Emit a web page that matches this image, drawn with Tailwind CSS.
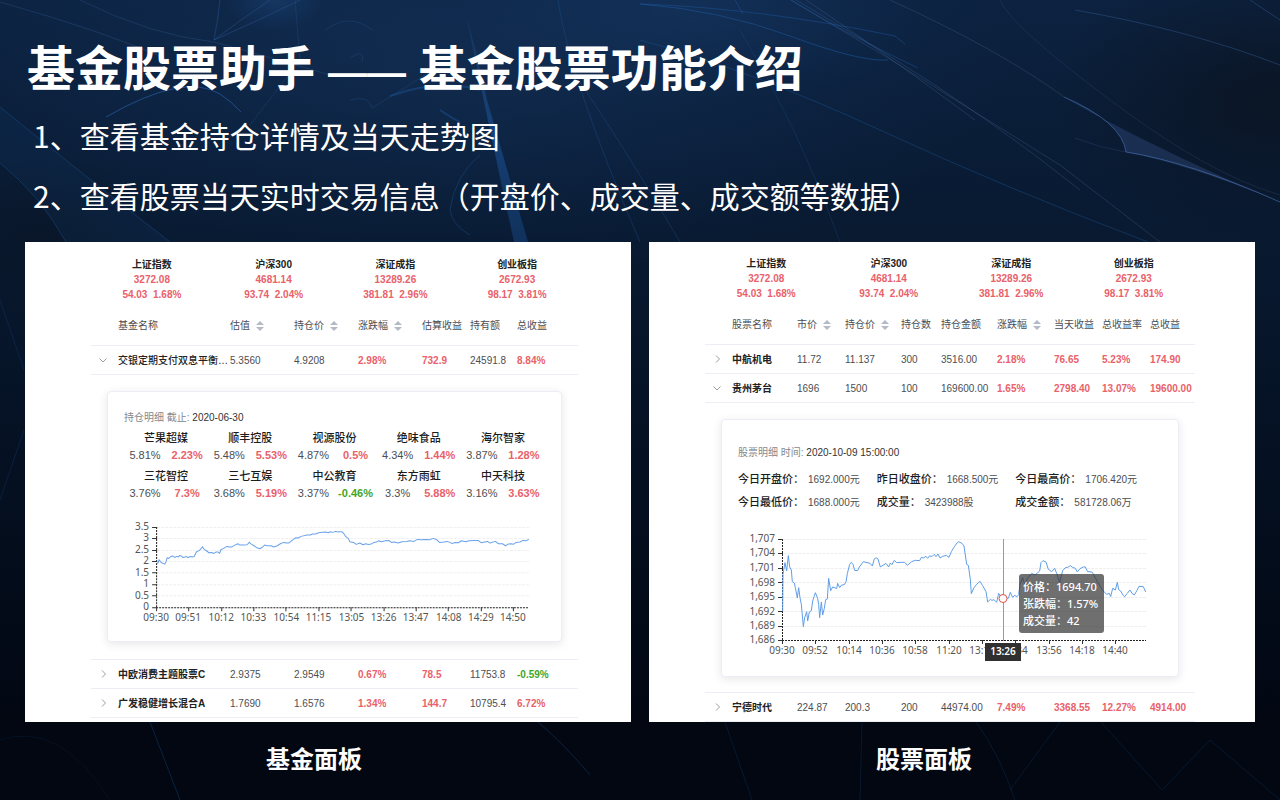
<!DOCTYPE html>
<html lang="zh-CN">
<head>
<meta charset="utf-8">
<meta name="viewport" content="width=device-width, initial-scale=1">
<title>基金股票助手</title>
<script src="https://cdn.jsdelivr.net/npm/@tailwindcss/browser@4"></script>
</head>
<body class="bg-[#030a17] font-['Liberation_Sans','Noto_Sans_CJK_SC',sans-serif]">
<main class="relative isolate min-h-screen overflow-hidden bg-linear-to-b from-[#0c2240] via-[#08182e] via-35% to-[#020712] to-90% px-[25px] pb-4">

  <!-- Backdrop: soft glows and light strands -->
  <svg class="absolute inset-0 -z-10 h-full w-full" viewBox="0 0 1280 800" preserveAspectRatio="none" fill="none" aria-hidden="true">
    <defs>
      <radialGradient id="glow"><stop offset="0" stop-color="#24508c" stop-opacity=".35"/><stop offset="1" stop-color="#1c4d8c" stop-opacity="0"/></radialGradient>
      <radialGradient id="shade"><stop offset="0" stop-color="#0b111c" stop-opacity=".7"/><stop offset="1" stop-color="#0b111c" stop-opacity="0"/></radialGradient>
      <linearGradient id="beam" x1="0" y1="0" x2="0" y2="1"><stop offset="0" stop-color="#2a6bb5" stop-opacity=".15"/><stop offset=".5" stop-color="#1f5ba8" stop-opacity=".5"/><stop offset="1" stop-color="#174c8c" stop-opacity=".45"/></linearGradient>
    </defs>
    <ellipse cx="450" cy="60" rx="560" ry="220" fill="url(#glow)" opacity=".7"/>
    <ellipse cx="275" cy="0" rx="50" ry="30" fill="url(#glow)"/>
    <ellipse cx="700" cy="10" rx="240" ry="90" fill="url(#glow)" opacity=".6"/>
    <ellipse cx="1270" cy="100" rx="220" ry="140" fill="url(#shade)"/>
    <ellipse cx="40" cy="240" rx="120" ry="90" fill="url(#shade)" opacity=".5"/>
    <path d="M466 15L476 52L487 100L528 242H514L492 140Z" fill="url(#beam)"/>
    <path d="M270 0Q240 20 214 40M220 0Q218 20 214 40M214 40Q260 20 300 0" stroke="#315f9e" stroke-opacity=".4"/>
    <path d="M0 2Q100 30 170 60M80 0Q150 35 214 42Q280 60 330 75" stroke="#34639c" stroke-opacity=".3"/>
    <path d="M106 117Q184 72 220 94Q232 102 241 112" stroke="#2b66b8" stroke-opacity=".6"/>
    <path d="M0 107Q90 180 170 242M0 163Q40 195 66 242" stroke="#1d5192" stroke-opacity=".45"/>
    <path d="M0 107Q90 180 170 242H66Q40 195 0 163Z" fill="#123a6b" fill-opacity=".2"/>
    <path d="M295 0L300 60L250 125M325 30Q350 12 372 30M350 58Q365 48 362 62M350 100Q370 95 372 108L430 72" stroke="#28588f" stroke-opacity=".3"/>
    <path d="M390 96Q440 78 480 90M440 110Q455 120 460 122" stroke="#1f5da8" stroke-opacity=".4" stroke-width="2"/>
    <path d="M480 155Q455 175 450 210Q452 225 470 235" stroke="#1f5da8" stroke-opacity=".35"/>
    <path d="M558 0Q570 80 640 242M575 75Q620 140 680 242" stroke="#2560a5" stroke-opacity=".28"/>
    <path d="M640 4Q720 10 790 36T888 60" stroke="#1d5ca8" stroke-opacity=".5"/>
    <path d="M791 0Q850 36 918 68M640 4Q760 8 895 36L905 44M735 0L743 14" stroke="#1f5fac" stroke-opacity=".4"/>
    <path d="M791 0L888 58L1060 165L1160 242M796 0L880 50Q990 118 1080 190M806 0Q880 50 975 120" stroke="#4b6a99" stroke-opacity=".3"/>
    <path d="M640 40Q750 70 880 130T1148 242" stroke="#1e5797" stroke-opacity=".4"/>
    <path d="M740 30Q800 130 840 242" stroke="#1e5797" stroke-opacity=".25"/>
    <path d="M890 0Q1000 50 1064 97" stroke="#576a8d" stroke-opacity=".3"/>
    <path d="M1000 0Q1010 25 1110 100T1280 195" stroke="#3b5680" stroke-opacity=".25"/>
    <path d="M1064 97Q1122 122 1126 152Q1190 165 1280 202Q1180 160 1090 112Z" fill="#334d82" fill-opacity=".4"/>
    <path d="M1064 97Q1122 122 1126 152Q1190 162 1280 202" stroke="#4c73b8" stroke-opacity=".6"/>
    <path d="M1075 138Q1100 148 1126 152" stroke="#415f96" stroke-opacity=".25"/>
    <path d="M1075 10Q1190 30 1280 65M1250 0L1280 20" stroke="#37639c" stroke-opacity=".4"/>
    <path d="M0 300L24 370M0 500L24 430" stroke="#174782" stroke-opacity=".3"/>
    <path d="M538 722Q565 745 590 775M150 722L180 800" stroke="#174a88" stroke-opacity=".4"/>
    <path d="M0 740Q60 720 110 800" stroke="#12396b" stroke-opacity=".2"/>
    <path d="M725 722L752 800M862 722L860 800M976 722Q1000 755 1015 800M1060 722L1010 790M1101 722L1162 790L1210 740L1280 800" stroke="#12396b" stroke-opacity=".35"/>
  </svg>

  <header class="pt-[35px] font-['Noto_Sans_CJK_SC',sans-serif] text-white">
    <h1 class="pl-0.5 text-[48px] leading-[60px] font-bold">基金股票助手 <span class="px-[2px] font-['Liberation_Sans',sans-serif] text-[39px] leading-none">——</span> 基金股票功能介绍</h1>
    <ul class="mt-2.5 pl-2 text-[30px] leading-[60px]">
      <li>1、查看基金持仓详情及当天走势图</li>
      <li>2、查看股票当天实时交易信息（开盘价、成交量、成交额等数据）</li>
    </ul>
  </header>

  <div class="mt-[17px] grid grid-cols-2 gap-[18px] text-[10px] leading-[15px] text-[#4c4e52]">

    <!-- Fund panel -->
    <figure class="flex flex-col">
      <section class="grow bg-white pt-[15px] pr-[53px] pb-1 pl-[66px]">
        <dl class="grid grid-cols-4 text-center font-bold text-[#e9616a]">
          <div><dt class="text-[#222]">上证指数</dt><dd>3272.08</dd><dd class="whitespace-pre">54.03  1.68%</dd></div>
          <div><dt class="text-[#222]">沪深300</dt><dd>4681.14</dd><dd class="whitespace-pre">93.74  2.04%</dd></div>
          <div><dt class="text-[#222]">深证成指</dt><dd>13289.26</dd><dd class="whitespace-pre">381.81  2.96%</dd></div>
          <div><dt class="text-[#222]">创业板指</dt><dd>2672.93</dd><dd class="whitespace-pre">98.17  3.81%</dd></div>
        </dl>
        <table class="mt-1 w-full table-fixed border-separate border-spacing-0 text-left whitespace-nowrap [&_td]:border-b [&_td]:border-[#ebeef5] [&_th]:border-b [&_th]:border-[#ebeef5]">
          <colgroup><col class="w-[27px]"><col class="w-[112px]"><col class="w-[64px]"><col class="w-[64px]"><col class="w-[64px]"><col class="w-[48px]"><col class="w-[47px]"><col class="w-[61px]"></colgroup>
          <thead>
            <tr class="h-10 [&_th]:font-normal">
              <th></th><th>基金名称</th>
              <th><button class="flex items-center gap-1.5">估值<svg class="h-2.5 w-2" viewBox="0 0 8 10" fill="#b4bac6" aria-hidden="true"><path d="M4 0L8 4H0ZM4 10L0 6H8Z"/></svg></button></th>
              <th><button class="flex items-center gap-1.5">持仓价<svg class="h-2.5 w-2" viewBox="0 0 8 10" fill="#b4bac6" aria-hidden="true"><path d="M4 0L8 4H0ZM4 10L0 6H8Z"/></svg></button></th>
              <th><button class="flex items-center gap-1.5">涨跌幅<svg class="h-2.5 w-2" viewBox="0 0 8 10" fill="#b4bac6" aria-hidden="true"><path d="M4 0L8 4H0ZM4 10L0 6H8Z"/></svg></button></th>
              <th>估算收益</th><th>持有额</th><th>总收益</th>
            </tr>
          </thead>
          <tbody>
            <tr class="h-[29px]">
              <td><button class="block pl-2" aria-label="收起" aria-expanded="true"><svg class="size-2" viewBox="0 0 8 8" fill="none" stroke="#999ca3"><path d="M0.5 2.5L4 6L7.5 2.5"/></svg></button></td>
              <td class="font-medium text-[#222]">交银定期支付双息平衡…</td><td>5.3560</td><td>4.9208</td>
              <td class="font-bold text-[#e9616a]">2.98%</td><td class="font-bold text-[#e9616a]">732.9</td><td>24591.8</td><td class="font-bold text-[#e9616a]">8.84%</td>
            </tr>
            <tr>
              <td colspan="8" class="px-4 pt-4 pb-[17px]">
                <div class="rounded-sm border border-[#ebeef5] bg-white pt-[18px] pb-3 shadow-[0_2px_10px_rgba(0,0,0,0.1)]">
                  <div class="px-4">
                    <p class="text-[#85878c]">持仓明细 截止: <time class="text-[#333]">2020-06-30</time></p>
                    <dl class="mt-[5px] grid grid-cols-5 text-center text-[11px] leading-[17px]">
                      <div class="pb-1"><dt class="font-medium text-[#1c1c1c]">芒果超媒</dt><dd class="grid grid-cols-2"><span>5.81%</span><b class="text-[#e9616a]">2.23%</b></dd></div>
                      <div class="pb-1"><dt class="font-medium text-[#1c1c1c]">顺丰控股</dt><dd class="grid grid-cols-2"><span>5.48%</span><b class="text-[#e9616a]">5.53%</b></dd></div>
                      <div class="pb-1"><dt class="font-medium text-[#1c1c1c]">视源股份</dt><dd class="grid grid-cols-2"><span>4.87%</span><b class="text-[#e9616a]">0.5%</b></dd></div>
                      <div class="pb-1"><dt class="font-medium text-[#1c1c1c]">绝味食品</dt><dd class="grid grid-cols-2"><span>4.34%</span><b class="text-[#e9616a]">1.44%</b></dd></div>
                      <div class="pb-1"><dt class="font-medium text-[#1c1c1c]">海尔智家</dt><dd class="grid grid-cols-2"><span>3.87%</span><b class="text-[#e9616a]">1.28%</b></dd></div>
                      <div class="pb-1"><dt class="font-medium text-[#1c1c1c]">三花智控</dt><dd class="grid grid-cols-2"><span>3.76%</span><b class="text-[#e9616a]">7.3%</b></dd></div>
                      <div class="pb-1"><dt class="font-medium text-[#1c1c1c]">三七互娱</dt><dd class="grid grid-cols-2"><span>3.68%</span><b class="text-[#e9616a]">5.19%</b></dd></div>
                      <div class="pb-1"><dt class="font-medium text-[#1c1c1c]">中公教育</dt><dd class="grid grid-cols-2"><span>3.37%</span><b class="text-[#3fa51f]">-0.46%</b></dd></div>
                      <div class="pb-1"><dt class="font-medium text-[#1c1c1c]">东方雨虹</dt><dd class="grid grid-cols-2"><span>3.3%</span><b class="text-[#e9616a]">5.88%</b></dd></div>
                      <div class="pb-1"><dt class="font-medium text-[#1c1c1c]">中天科技</dt><dd class="grid grid-cols-2"><span>3.16%</span><b class="text-[#e9616a]">3.63%</b></dd></div>
                    </dl>
                  </div>
                  <svg class="mt-2 block w-full font-['Noto_Sans',sans-serif] text-[10px]" viewBox="108 514 452 115" fill="none" role="img" aria-label="当天走势图">
                    <path d="M157 527.5H528M157 538.5H528M157 550.5H528M157 561.5H528M157 572.5H528M157 584.5H528M157 595.5H528" stroke="#f0f0f0" stroke-dasharray="3 1"/>
                    <path d="M156.5 527V607M156 607.5H528" stroke="#222" stroke-dasharray="2 1"/>
                    <path d="M152 527.5H157M152 538.5H157M152 550.5H157M152 561.5H157M152 572.5H157M152 584.5H157M152 595.5H157M152 607.5H157M156.5 607V611M188.5 607V611M221.5 607V611M253.5 607V611M285.5 607V611M318.5 607V611M350.5 607V611M383.5 607V611M415.5 607V611M447.5 607V611M480.5 607V611M512.5 607V611" stroke="#333"/>
                    <g fill="#555" text-anchor="end"><text x="149" y="530">3.5</text><text x="149" y="541">3</text><text x="149" y="553">2.5</text><text x="149" y="564">2</text><text x="149" y="576">1.5</text><text x="149" y="587">1</text><text x="149" y="599">0.5</text><text x="149" y="610">0</text></g>
                    <g fill="#555" text-anchor="middle"><text x="156" y="621">09:30</text><text x="188" y="621">09:51</text><text x="221" y="621">10:12</text><text x="253" y="621">10:33</text><text x="286" y="621">10:54</text><text x="318" y="621">11:15</text><text x="351" y="621">13:05</text><text x="383" y="621">13:26</text><text x="415" y="621">13:47</text><text x="448" y="621">14:08</text><text x="480" y="621">14:29</text><text x="512" y="621">14:50</text></g>
                    <g transform="translate(100 510) scale(.33333)"><path d="M170 160L174 158L177 149L183 157L194 162L198 154L201 143L206 145L211 140L218 138L224 142L230 139L234 141L239 136L244 138L248 142L255 141L259 139L263 143L270 139L276 141L282 139L289 125L298 121L307 110L312 118L319 122L326 128L334 127L341 130L347 126L354 126L358 130L362 119L370 115L380 109L387 111L394 111L402 106L413 101L418 105L430 105L440 104L447 97L453 102L461 107L468 112L479 116L486 111L493 105L500 107L512 107L520 111L531 107L540 101L550 97L558 99L565 99L575 91L586 83L593 84L602 79L620 75L630 75L636 72L645 72L655 68L666 67L676 66L683 68L690 65L697 67L705 64L711 66L716 65L724 65L730 71L736 80L743 85L748 95L759 97L767 103L778 99L787 104L796 101L803 103L812 102L820 97L828 96L835 92L842 95L854 92L865 91L872 97L881 96L893 99L904 95L918 94L927 92L940 94L950 88L963 89L975 88L986 89L998 85L1008 89L1016 97L1030 96L1040 94L1053 100L1064 97L1073 98L1082 92L1095 95L1105 92L1120 91L1132 91L1141 98L1160 94L1168 99L1183 94L1193 101L1205 101L1214 107L1222 102L1232 101L1237 103L1246 97L1257 96L1266 91L1275 92L1284 88" stroke="#69a2ea" stroke-width="3" stroke-linejoin="round"/></g>
                  </svg>
                </div>
              </td>
            </tr>
            <tr class="h-[29px]">
              <td><button class="block pl-2" aria-label="展开" aria-expanded="false"><svg class="size-2" viewBox="0 0 8 8" fill="none" stroke="#999ca3"><path d="M3 0.5L6.5 4L3 7.5"/></svg></button></td>
              <td class="font-bold text-[#222]">中欧消费主题股票C</td><td>2.9375</td><td>2.9549</td>
              <td class="font-bold text-[#e9616a]">0.67%</td><td class="font-bold text-[#e9616a]">78.5</td><td>11753.8</td><td class="font-bold text-[#3fa51f]">-0.59%</td>
            </tr>
            <tr class="h-[29px]">
              <td><button class="block pl-2" aria-label="展开" aria-expanded="false"><svg class="size-2" viewBox="0 0 8 8" fill="none" stroke="#999ca3"><path d="M3 0.5L6.5 4L3 7.5"/></svg></button></td>
              <td class="font-bold text-[#222]">广发稳健增长混合A</td><td>1.7690</td><td>1.6576</td>
              <td class="font-bold text-[#e9616a]">1.34%</td><td class="font-bold text-[#e9616a]">144.7</td><td>10795.4</td><td class="font-bold text-[#e9616a]">6.72%</td>
            </tr>
          </tbody>
        </table>
      </section>
      <figcaption class="pt-[18px] pr-7 text-center font-['Noto_Sans_CJK_SC',sans-serif] text-2xl leading-9 font-bold text-white">基金面板</figcaption>
    </figure>

    <!-- Stock panel -->
    <figure class="flex flex-col">
      <section class="grow bg-white pt-3.5 pr-[60px] pl-[56px]">
        <dl class="grid grid-cols-4 text-center font-bold text-[#e9616a]">
          <div><dt class="text-[#222]">上证指数</dt><dd>3272.08</dd><dd class="whitespace-pre">54.03  1.68%</dd></div>
          <div><dt class="text-[#222]">沪深300</dt><dd>4681.14</dd><dd class="whitespace-pre">93.74  2.04%</dd></div>
          <div><dt class="text-[#222]">深证成指</dt><dd>13289.26</dd><dd class="whitespace-pre">381.81  2.96%</dd></div>
          <div><dt class="text-[#222]">创业板指</dt><dd>2672.93</dd><dd class="whitespace-pre">98.17  3.81%</dd></div>
        </dl>
        <table class="mt-1 w-full table-fixed border-separate border-spacing-0 text-left whitespace-nowrap [&_td]:border-b [&_td]:border-[#ebeef5] [&_th]:border-b [&_th]:border-[#ebeef5]">
          <colgroup><col class="w-[27px]"><col class="w-[65px]"><col class="w-[48px]"><col class="w-[56px]"><col class="w-[40px]"><col class="w-[56px]"><col class="w-[57px]"><col class="w-[48px]"><col class="w-[48px]"><col class="w-[45px]"></colgroup>
          <thead>
            <tr class="h-10 [&_th]:font-normal">
              <th></th><th>股票名称</th>
              <th><button class="flex items-center gap-1.5">市价<svg class="h-2.5 w-2" viewBox="0 0 8 10" fill="#b4bac6" aria-hidden="true"><path d="M4 0L8 4H0ZM4 10L0 6H8Z"/></svg></button></th>
              <th><button class="flex items-center gap-1.5">持仓价<svg class="h-2.5 w-2" viewBox="0 0 8 10" fill="#b4bac6" aria-hidden="true"><path d="M4 0L8 4H0ZM4 10L0 6H8Z"/></svg></button></th>
              <th>持仓数</th><th>持仓金额</th>
              <th><button class="flex items-center gap-1.5">涨跌幅<svg class="h-2.5 w-2" viewBox="0 0 8 10" fill="#b4bac6" aria-hidden="true"><path d="M4 0L8 4H0ZM4 10L0 6H8Z"/></svg></button></th>
              <th>当天收益</th><th>总收益率</th><th>总收益</th>
            </tr>
          </thead>
          <tbody>
            <tr class="h-[29px]">
              <td><button class="block pl-2" aria-label="展开" aria-expanded="false"><svg class="size-2" viewBox="0 0 8 8" fill="none" stroke="#999ca3"><path d="M3 0.5L6.5 4L3 7.5"/></svg></button></td>
              <td class="font-bold text-[#222]">中航机电</td><td>11.72</td><td>11.137</td><td>300</td><td>3516.00</td>
              <td class="font-bold text-[#e9616a]">2.18%</td><td class="font-bold text-[#e9616a]">76.65</td><td class="font-bold text-[#e9616a]">5.23%</td><td class="font-bold text-[#e9616a]">174.90</td>
            </tr>
            <tr class="h-[29px]">
              <td><button class="block pl-2" aria-label="收起" aria-expanded="true"><svg class="size-2" viewBox="0 0 8 8" fill="none" stroke="#999ca3"><path d="M0.5 2.5L4 6L7.5 2.5"/></svg></button></td>
              <td class="font-bold text-[#222]">贵州茅台</td><td>1696</td><td>1500</td><td>100</td><td>169600.00</td>
              <td class="font-bold text-[#e9616a]">1.65%</td><td class="font-bold text-[#e9616a]">2798.40</td><td class="font-bold text-[#e9616a]">13.07%</td><td class="font-bold text-[#e9616a]">19600.00</td>
            </tr>
            <tr>
              <td colspan="10" class="px-4 pt-4 pb-[15px]">
                <div class="rounded-sm border border-[#ebeef5] bg-white pt-[25px] pb-3 shadow-[0_2px_10px_rgba(0,0,0,0.1)]">
                  <div class="pr-6 pl-4">
                    <p class="text-[#85878c]">股票明细 时间: <time class="text-[#333]">2020-10-09 15:00:00</time></p>
                    <dl class="mt-2 grid grid-cols-3 leading-[23px] [&_dt]:text-[11px] [&_dt]:font-medium [&_dt]:text-[#1c1c1c]">
                      <div class="flex gap-1"><dt>今日开盘价：</dt><dd>1692.000元</dd></div>
                      <div class="flex gap-1"><dt>昨日收盘价：</dt><dd>1668.500元</dd></div>
                      <div class="flex gap-1"><dt>今日最高价：</dt><dd>1706.420元</dd></div>
                      <div class="flex gap-1"><dt>今日最低价：</dt><dd>1688.000元</dd></div>
                      <div class="flex gap-1"><dt>成交量：</dt><dd>3423988股</dd></div>
                      <div class="flex gap-1"><dt>成交金额：</dt><dd>581728.06万</dd></div>
                    </dl>
                  </div>
                  <svg class="mt-3 block w-full font-['Noto_Sans',sans-serif] text-[10px]" viewBox="722 525 456 138" fill="none" role="img" aria-label="股票当天走势图">
                    <path d="M783 538.5H1146M783 552.5H1146M783 567.5H1146M783 581.5H1146M783 596.5H1146M783 610.5H1146M783 625.5H1146" stroke="#eee" stroke-dasharray="3 1"/>
                    <path d="M782.5 538V640M782 639.5H1146" stroke="#222" stroke-dasharray="2 1"/>
                    <path d="M778 538.5H783M778 552.5H783M778 567.5H783M778 581.5H783M778 596.5H783M778 610.5H783M778 625.5H783M778 639.5H783M782.5 639V643M815.5 639V643M849.5 639V643M882.5 639V643M915.5 639V643M949.5 639V643M982.5 639V643M1015.5 639V643M1049.5 639V643M1082.5 639V643M1115.5 639V643" stroke="#333"/>
                    <g fill="#555" text-anchor="end"><text x="775" y="541">1,707</text><text x="775" y="555">1,704</text><text x="775" y="570">1,701</text><text x="775" y="585">1,698</text><text x="775" y="599">1,695</text><text x="775" y="614">1,692</text><text x="775" y="628">1,689</text><text x="775" y="642">1,686</text></g>
                    <g fill="#555" text-anchor="middle"><text x="782" y="653">09:30</text><text x="815" y="653">09:52</text><text x="849" y="653">10:14</text><text x="882" y="653">10:36</text><text x="915" y="653">10:58</text><text x="949" y="653">11:20</text><text x="982" y="653">13:12</text><text x="1015" y="653">13:34</text><text x="1049" y="653">13:56</text><text x="1082" y="653">14:18</text><text x="1115" y="653">14:40</text></g>
                    <g transform="translate(710 520) scale(.33333)"><path d="M218 270L219 160L221 148L225 125L230 150L235 104L239 138L244 147L247 182L253 186L256 200L262 231L266 200L270 230L274 250L280 317L284 290L290 272L293 300L298 273L304 269L308 240L312 228L316 215L323 232L326 250L329 290L334 243L338 282L343 262L347 236L352 234L356 172L362 209L368 198L376 201L380 203L383 187L389 200L395 192L403 191L408 183L412 158L419 130L424 124L429 130L434 148L443 149L448 138L460 122L468 124L480 127L487 135L493 114L498 110L504 114L511 138L522 131L528 127L536 138L541 126L546 131L553 118L560 125L574 124L584 124L592 133L605 122L616 118L629 119L634 109L640 111L648 106L653 112L658 105L667 106L673 100L678 107L684 99L690 111L698 106L709 103L717 109L724 92L733 77L741 66L746 62L756 67L762 75L770 130L775 133L781 175L784 218L792 200L800 190L810 181L818 194L828 212L833 243L841 235L846 238L852 236L860 244L866 217L873 229L880 231L895 232L901 214L908 229L914 223L921 227L926 221L930 190L938 170L944 190L952 173L965 157L975 162L989 150L993 125L999 119L1008 123L1015 145L1025 152L1034 142L1040 157L1049 184L1058 149L1065 141L1075 138L1081 134L1088 139L1096 142L1102 153L1110 143L1120 138L1126 138L1133 152L1146 153L1155 168L1162 182L1170 195L1178 208L1190 220L1198 217L1202 227L1208 202L1216 207L1222 184L1226 206L1232 210L1240 224L1244 227L1251 218L1260 207L1266 217L1273 222L1281 208L1287 196L1300 197L1307 213" stroke="#5f9de8" stroke-width="3" stroke-linejoin="round"/></g>
                    <path d="M1003.5 538V640" stroke="#999"/>
                    <circle cx="1003" cy="597.5" r="4" fill="#fff" stroke="#d9544f"/>
                    <rect x="985" y="642" width="36" height="18" fill="#303030"/>
                    <text x="1003" y="654" fill="#fff" text-anchor="middle" font-weight="600">13:26</text>
                    <rect x="1019" y="573" width="85" height="59" rx="3" fill="#323232" fill-opacity=".7"/>
                    <g fill="#fff" class="font-['Noto_Sans','Noto_Sans_CJK_SC',sans-serif] text-[11px] font-medium"><text x="1023" y="590">价格：1694.70</text><text x="1023" y="607">张跌幅：1.57%</text><text x="1023" y="624">成交量：42</text></g>
                  </svg>
                </div>
              </td>
            </tr>
            <tr class="h-[29px]">
              <td><button class="block pl-2" aria-label="展开" aria-expanded="false"><svg class="size-2" viewBox="0 0 8 8" fill="none" stroke="#999ca3"><path d="M3 0.5L6.5 4L3 7.5"/></svg></button></td>
              <td class="font-bold text-[#222]">宁德时代</td><td>224.87</td><td>200.3</td><td>200</td><td>44974.00</td>
              <td class="font-bold text-[#e9616a]">7.49%</td><td class="font-bold text-[#e9616a]">3368.55</td><td class="font-bold text-[#e9616a]">12.27%</td><td class="font-bold text-[#e9616a]">4914.00</td>
            </tr>
          </tbody>
        </table>
      </section>
      <figcaption class="pt-[18px] pr-14 text-center font-['Noto_Sans_CJK_SC',sans-serif] text-2xl leading-9 font-bold text-white">股票面板</figcaption>
    </figure>
  </div>
</main>
</body>
</html>
